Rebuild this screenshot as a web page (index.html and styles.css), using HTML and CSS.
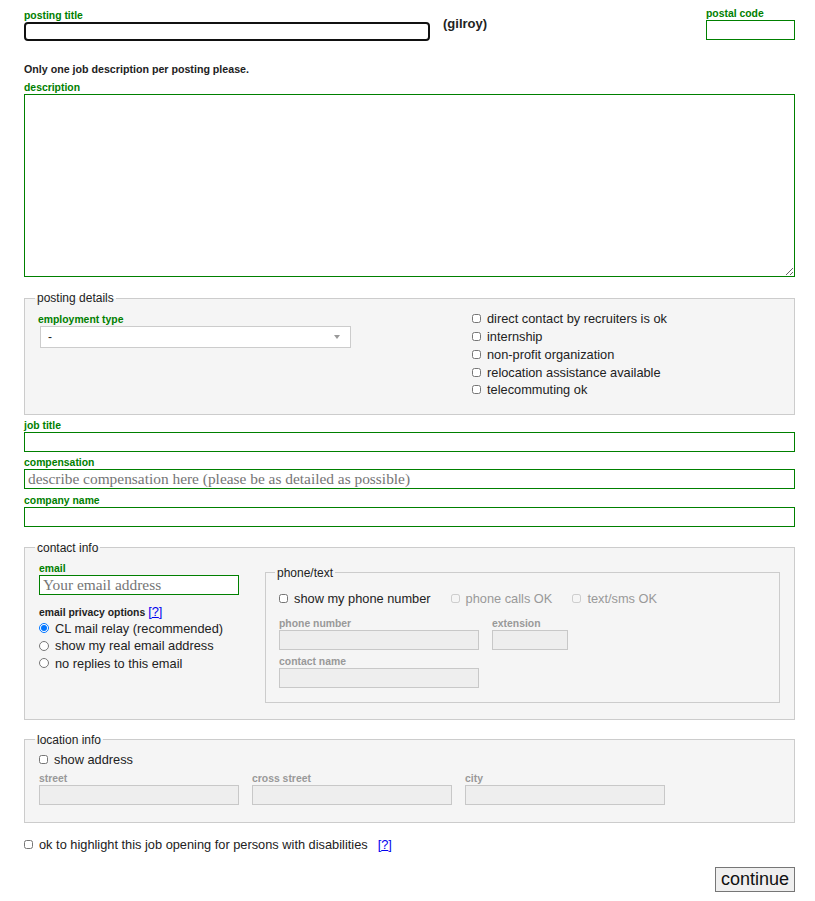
FILE: index.html
```html
<!DOCTYPE html>
<html lang="en">
<head>
<meta charset="utf-8">
<title>posting form</title>
<link rel="stylesheet" href="styles.css">
</head>
<body>
<div class="page">
  <div class="top-row">
    <div class="title-group">
      <label class="lbl" for="ptitle">posting title</label>
      <input id="ptitle" class="title-input" type="text">
    </div>
    <span class="area">(gilroy)</span>
    <div class="postal-group">
      <label class="lbl" for="postal">postal code</label>
      <input id="postal" class="inp postal-input" type="text">
    </div>
  </div>

  <p class="note">Only one job description per posting please.</p>
  <label class="lbl" for="desc">description</label>
  <textarea id="desc" class="desc"></textarea>

  <fieldset class="box details">
    <legend>posting details</legend>
    <div class="details-grid">
      <div class="emp">
        <label class="lbl">employment type</label>
        <div class="select-wrap">
          <select class="select"><option>-</option></select>
          <span class="arrow"></span>
        </div>
      </div>
      <div class="checks">
        <label class="chk"><input type="checkbox">direct contact by recruiters is ok</label>
        <label class="chk"><input type="checkbox">internship</label>
        <label class="chk"><input type="checkbox">non-profit organization</label>
        <label class="chk"><input type="checkbox">relocation assistance available</label>
        <label class="chk"><input type="checkbox">telecommuting ok</label>
      </div>
    </div>
  </fieldset>

  <div class="field first">
    <label class="lbl">job title</label>
    <input class="inp full" type="text">
  </div>
  <div class="field">
    <label class="lbl">compensation</label>
    <input class="inp full" type="text" placeholder="describe compensation here (please be as detailed as possible)">
  </div>
  <div class="field">
    <label class="lbl">company name</label>
    <input class="inp full" type="text">
  </div>

  <fieldset class="box contact">
    <legend>contact info</legend>
    <div class="contact-grid">
      <div class="email-col">
        <label class="lbl">email</label>
        <input class="inp email" type="text" placeholder="Your email address">
        <div class="privacy">email privacy options <span class="help">[<a href="#">?</a>]</span></div>
        <label class="opt"><input type="radio" name="privacy" checked>CL mail relay (recommended)</label>
        <label class="opt"><input type="radio" name="privacy">show my real email address</label>
        <label class="opt"><input type="radio" name="privacy">no replies to this email</label>
      </div>
      <fieldset class="box phone">
        <legend>phone/text</legend>
        <div class="phone-row">
          <label class="chk"><input type="checkbox">show my phone number</label>
          <label class="chk off"><input type="checkbox" disabled>phone calls OK</label>
          <label class="chk off"><input type="checkbox" disabled>text/sms OK</label>
        </div>
        <div class="phone-fields">
          <div class="dfield">
            <label class="lbl off">phone number</label>
            <input class="inp dis w200" type="text" disabled>
          </div>
          <div class="dfield">
            <label class="lbl off">extension</label>
            <input class="inp dis w76" type="text" disabled>
          </div>
        </div>
        <div class="dfield contact-name">
          <label class="lbl off">contact name</label>
          <input class="inp dis w200" type="text" disabled>
        </div>
      </fieldset>
    </div>
  </fieldset>

  <fieldset class="box location">
    <legend>location info</legend>
    <label class="chk"><input type="checkbox">show address</label>
    <div class="loc-fields">
      <div class="dfield">
        <label class="lbl off">street</label>
        <input class="inp dis w200" type="text" disabled>
      </div>
      <div class="dfield">
        <label class="lbl off">cross street</label>
        <input class="inp dis w200" type="text" disabled>
      </div>
      <div class="dfield">
        <label class="lbl off">city</label>
        <input class="inp dis w200" type="text" disabled>
      </div>
    </div>
  </fieldset>

  <div class="ada">
    <label class="chk"><input type="checkbox">ok to highlight this job opening for persons with disabilities</label>
    <span class="help">[<a href="#">?</a>]</span>
  </div>

  <div class="actions">
    <button class="continue" type="button">continue</button>
  </div>
</div>
</body>
</html>
```

FILE: styles.css
```css
* { box-sizing: border-box; }
html, body { margin: 0; padding: 0; background: #fff; }
body {
  font-family: "Liberation Sans", Arial, sans-serif;
  font-size: 12.8px;
  color: #222;
}
.page { padding: 0 20px 10px 24px; }

.top-row { display: flex; align-items: flex-start; }
.title-group { margin-top: 10px; width: 406px; }
.lbl {
  display: block;
  font-size: 10.4px;
  font-weight: bold;
  color: #008000;
  line-height: 12px;
}
.lbl.off { color: #999; }
.title-input {
  display: block;
  width: 406px;
  height: 19px;
  border: 2px solid #111;
  border-radius: 4px;
  margin: 0;
  padding: 0 3px;
  background: #fff;
  outline: none;
}
.area {
  margin: 16px 0 0 13px;
  font-size: 13px;
  font-weight: bold;
  line-height: 15px;
  color: #222;
}
.postal-group { margin: 8px 0 0 auto; width: 89px; }

.inp {
  display: block;
  height: 20px;
  border: 1px solid #008000;
  margin: 0;
  padding: 0 3px;
  background: #fff;
  font-family: "Liberation Serif", "Times New Roman", serif;
  font-size: 15.4px;
  color: #222;
  outline: none;
  border-radius: 0;
}
.inp::placeholder { color: #757575; }
.postal-input { width: 89px; }
.full { width: 100%; }
.email { width: 200px; }
.w200 { width: 200px; }
.w76 { width: 76px; }
.inp.dis { background: #eee; border-color: #c8c8c8; }

.note {
  margin: 22px 0 6px;
  font-size: 10.67px;
  font-weight: bold;
  line-height: 13px;
}
.desc {
  display: block;
  width: 100%;
  height: 183px;
  border: 1px solid #008000;
  margin: 0;
  padding: 2px;
  resize: vertical;
  outline: none;
  background: #fff;
  font-family: "Liberation Mono", monospace;
}

.box {
  border: 1px solid #ccc;
  background: #f5f5f5;
  margin: 0;
  min-width: 0;
}
.box > legend {
  padding: 0 2px;
  margin-left: -4px;
  font-size: 12px;
  line-height: 14px;
  color: #222;
}
.details > legend { margin-left: -3px; }

.details { margin-top: 14px; padding: 5px 14px 15px 13px; }
.details-grid { display: grid; grid-template-columns: 434px 1fr; }
.emp { padding-top: 4px; }
.select-wrap { position: relative; width: 311px; height: 22px; margin-left: 2px; }
.select {
  -webkit-appearance: none;
  appearance: none;
  display: block;
  width: 100%;
  height: 100%;
  border: 1px solid #ccc;
  background: #fff;
  border-radius: 0;
  padding: 0 0 0 7px;
  font-family: inherit;
  font-size: 12px;
  color: #222;
  margin: 0;
  outline: none;
}
.arrow {
  position: absolute;
  right: 11px;
  top: 9px;
  width: 0;
  height: 0;
  border-left: 3px solid transparent;
  border-right: 3px solid transparent;
  border-top: 4px solid #999;
  pointer-events: none;
}

.chk {
  display: flex;
  align-items: center;
  gap: 6px;
  height: 17.75px;
  white-space: nowrap;
}
.chk input {
  width: 9px;
  height: 9px;
  margin: 0;
  flex: none;
}
.chk.off { color: #999; }

.field { margin-top: 5.5px; }
.field.first { margin-top: 5px; }

.contact { margin-top: 14px; padding: 8px 14px 16px 14px; }
.contact-grid {
  display: grid;
  grid-template-columns: 200px 1fr;
  column-gap: 26px;
  align-items: start;
}
.privacy {
  margin-top: 9px;
  font-size: 10.4px;
  font-weight: bold;
  line-height: 15px;
  color: #222;
}
.help { font-size: 12.8px; font-weight: normal; color: #00e; }
.help a { color: #00e; }
.opt {
  display: flex;
  align-items: center;
  gap: 6px;
  height: 17.4px;
  white-space: nowrap;
}
.opt input { width: 10px; height: 10px; margin: 0; flex: none; }

.phone { margin-top: 3px; padding: 10px 14px 14px 13px; background: #f5f5f5; }
.phone-row { display: flex; gap: 20px; }
.phone-fields { display: flex; gap: 13px; margin-top: 10px; }
.contact-name { margin-top: 6px; }

.location { margin-top: 13px; padding: 4px 14px 17px 14px; }
.loc-fields { display: flex; gap: 13px; margin-top: 5px; }

.ada {
  display: flex;
  align-items: center;
  gap: 10px;
  margin-top: 12px;
}

.actions { display: flex; justify-content: flex-end; margin-top: 13.5px; }
.continue {
  height: 25px;
  padding: 0 5px;
  border: 1px solid #767676;
  border-radius: 0;
  background: #efefef;
  font-family: "Liberation Sans", Arial, sans-serif;
  font-size: 18px;
  color: #111;
  margin: 0;
}
```
